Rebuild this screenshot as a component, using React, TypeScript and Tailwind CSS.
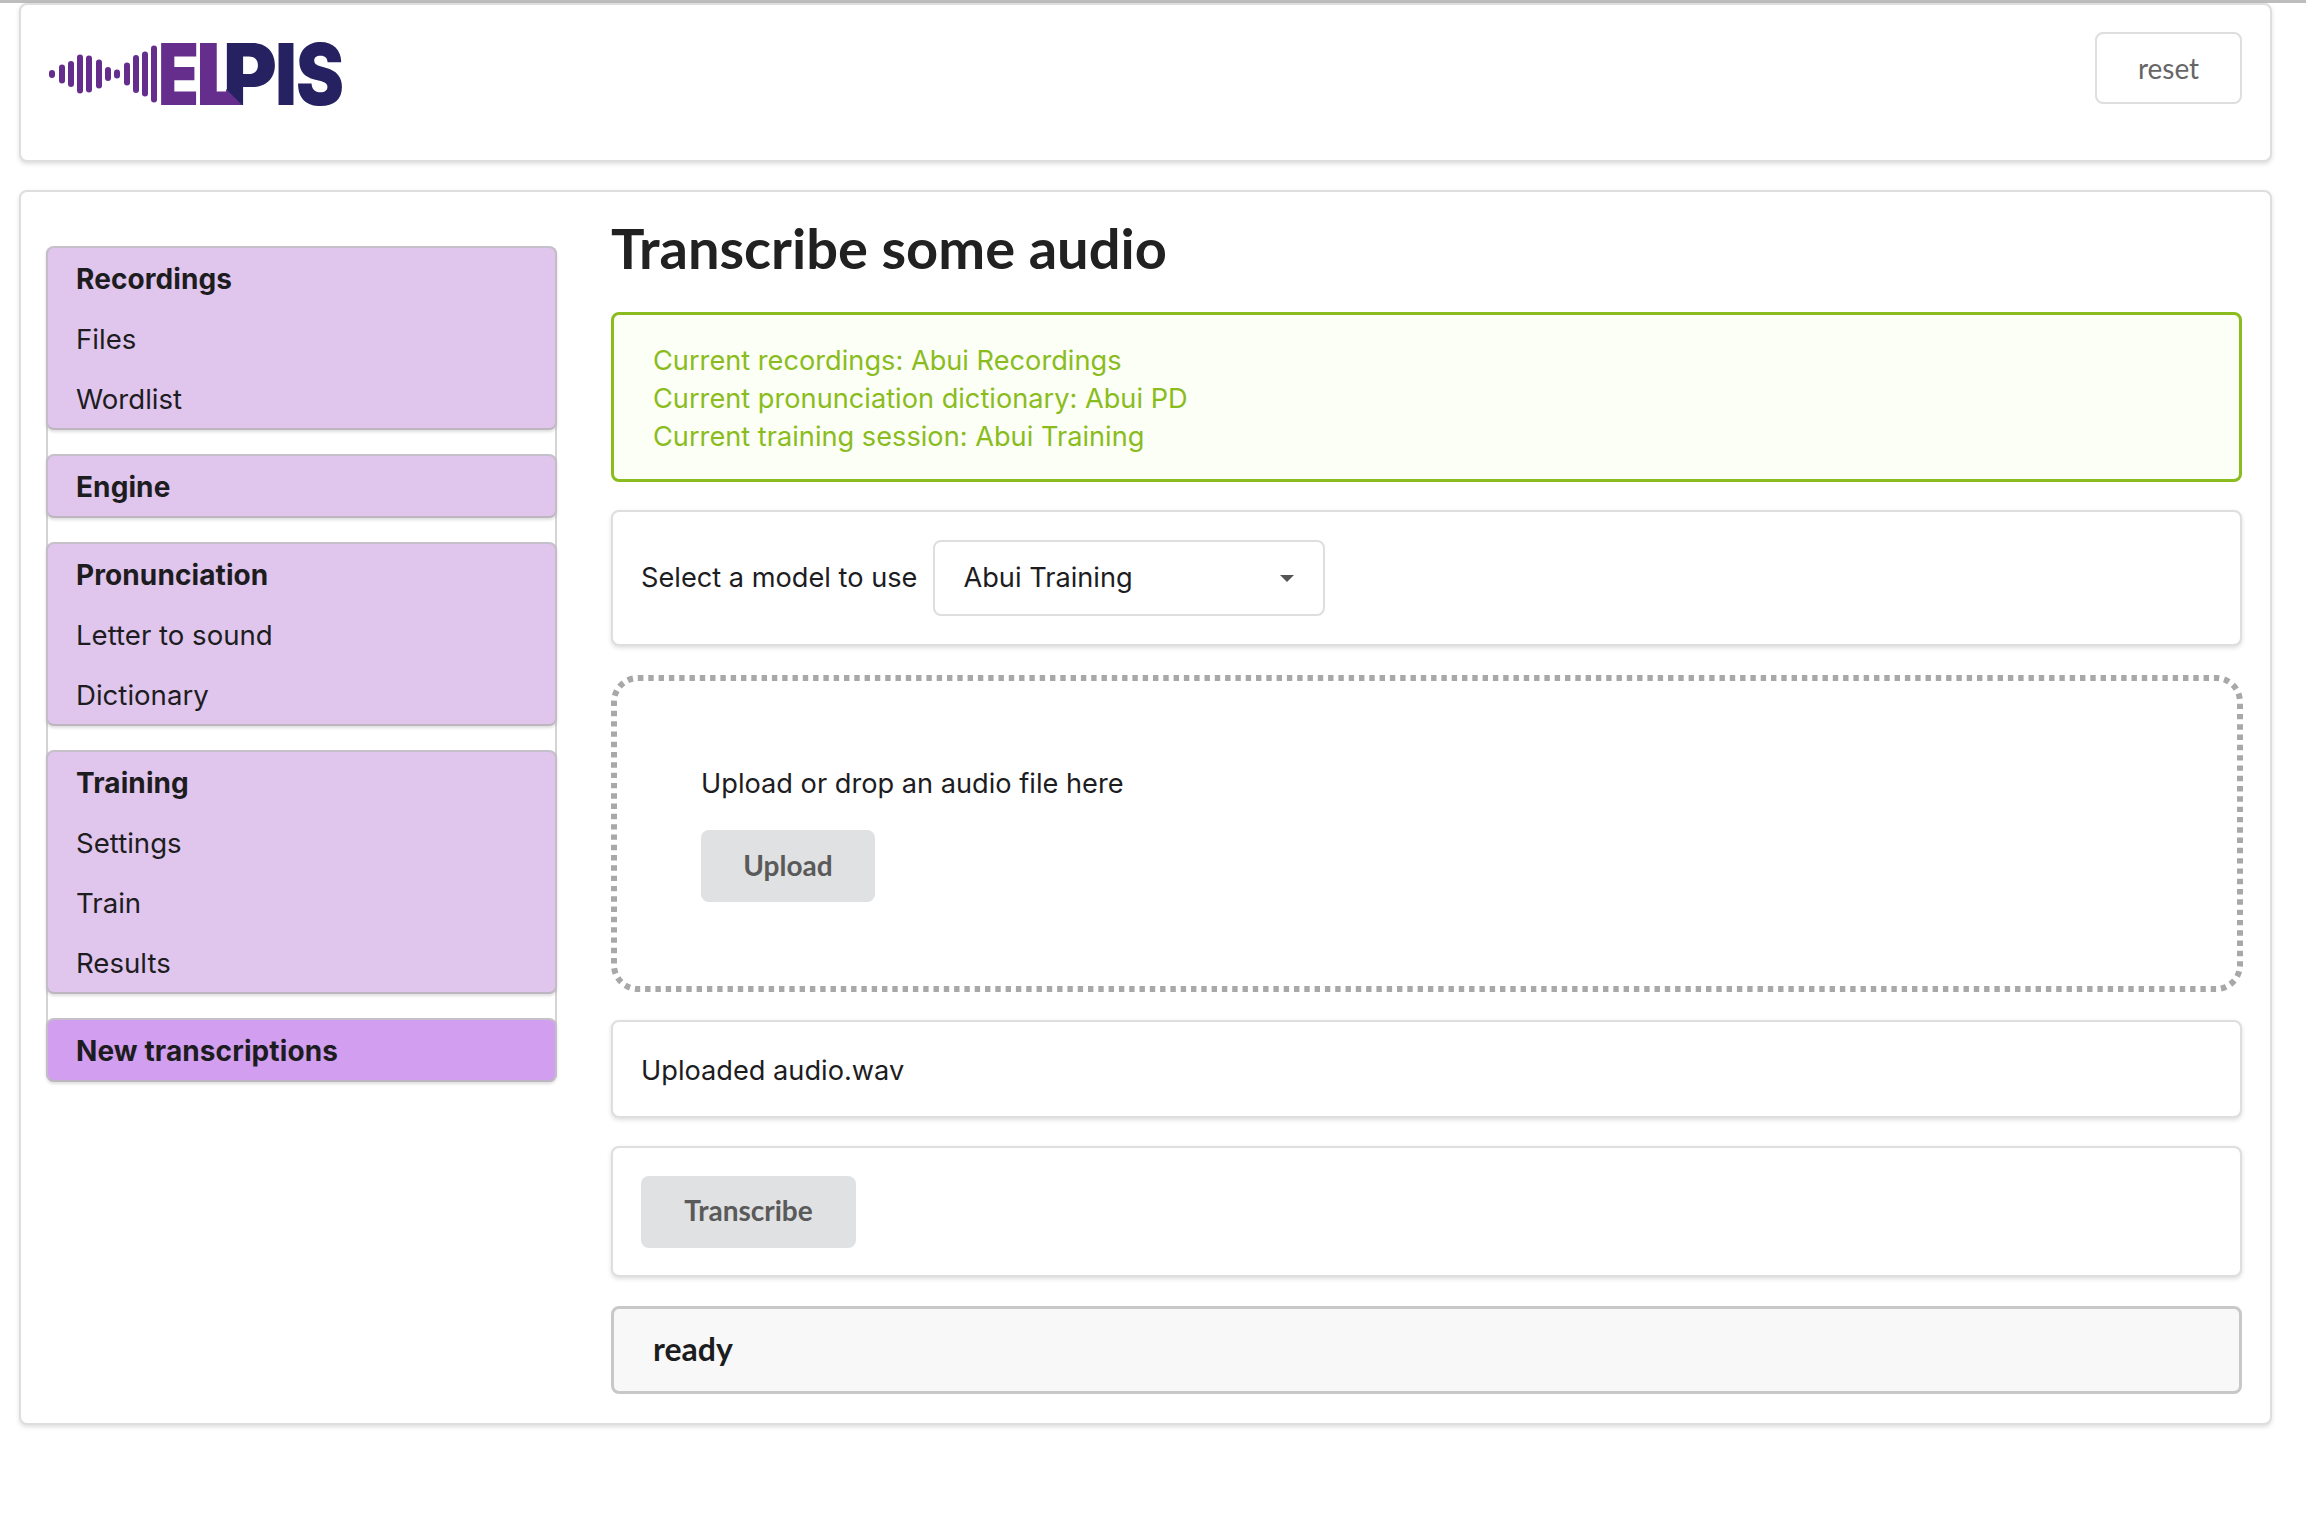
const sections = [
  { title: "Recordings", items: ["Files", "Wordlist"] },
  { title: "Engine", items: [] },
  { title: "Pronunciation", items: ["Letter to sound", "Dictionary"] },
  { title: "Training", items: ["Settings", "Train", "Results"] },
  { title: "New transcriptions", items: [], active: true },
];

const bars = [
  [51, 8], [61, 19], [70, 26], [79, 39], [88, 37], [98, 29],
  [107, 14], [116, 9], [126, 23], [135, 38], [144, 45], [153, 57],
];

// logo letters are placed one by one so the wordmark keeps its tight spacing
const letters = [
  { ch: "E", x: 157, w: 41, fill: "#652d8c" },
  { ch: "L", x: 195, w: 48, fill: "#652d8c" },
  { ch: "P", x: 222, w: 54, fill: "#262262" },
  { ch: "I", x: 274, w: 22, fill: "#262262" },
  { ch: "S", x: 295, w: 48, fill: "#262262" },
];

function Logo() {
  return (
    <svg width="310" height="70" viewBox="46 38 310 70" className="block">
      {bars.map(([x, h]) => (
        <rect key={x} x={x - 3} y={73 - h / 2} width="6" height={h} rx="3" fill="#652d8c" />
      ))}
      {letters.map((l) => (
        <text
          key={l.ch}
          x={l.x}
          y="104"
          fill={l.fill}
          fontFamily="Inter, sans-serif"
          fontWeight="900"
          fontSize="85"
          textLength={l.w}
          lengthAdjust="spacingAndGlyphs"
        >
          {l.ch}
        </text>
      ))}
      <polygon points="225,88 241,104 225,104" fill="#652d8c" />
    </svg>
  );
}

function Segment({ className = "", children }: { className?: string; children: React.ReactNode }) {
  return (
    <div className={`rounded-lg border-2 border-[#dedede] bg-white shadow-[0_2px_4px_0_rgba(34,36,38,0.15)] ${className}`}>
      {children}
    </div>
  );
}

function GreyButton({ label, className = "" }: { label: string; className?: string }) {
  return (
    <button className={`h-[72px] rounded-lg bg-[#e0e1e2] pb-[3px] font-['Lato'] text-[28px] font-bold text-[#5a5a5a] ${className}`}>
      {label}
    </button>
  );
}

export default function App() {
  return (
    <div className="min-h-[1516px] bg-white font-['Inter',sans-serif] text-[27.2px] text-[#1d1d1f]">
      <div className="h-[3px] bg-[#bdbdbd]" />

      {/* Header */}
      <div className="pl-[19px] pr-[34px]">
        <Segment className="flex h-[159px] items-start justify-between pl-[26px] pr-[28px] pt-[27px]">
          <div className="pt-[7px]">
            <Logo />
          </div>
          <button className="h-[72px] w-[147px] rounded-lg border-2 border-[#dedede] bg-white pb-[1px] font-['Lato'] text-[28px] text-[#666]">
            reset
          </button>
        </Segment>
      </div>

      {/* Main */}
      <div className="mt-[28px] pl-[19px] pr-[34px]">
        <Segment className="flex h-[1235px] pl-[25px] pr-[28px]">
          <div className="mt-[54px] w-[511px] shrink-0 self-start rounded-lg border-x-2 border-[#d4d4d4]">
            <div className="-mx-[2px] flex flex-col gap-[24px]">
              {sections.map((s) => (
                <div
                  key={s.title}
                  className={`rounded-lg border-2 border-x-[#c4bcc8] border-t-[#c6c0ca] border-b-[#bdb6c0] shadow-[0_2px_3px_0_rgba(34,36,38,0.15)] ${s.active ? "bg-[#d29ef0]" : "bg-[#e0c5ed]"}`}
                >
                  <div className="-mt-[2px] flex h-[62px] items-center px-[28px] pt-[3px] text-[28px] font-bold tracking-[0.1px]">
                    {s.title}
                  </div>
                  {s.items.map((item) => (
                    <div key={item} className="flex h-[60px] items-center px-[28px] pt-[3px] text-[27.6px]">
                      {item}
                    </div>
                  ))}
                </div>
              ))}
            </div>
          </div>

          <div className="ml-[54px] flex min-w-0 flex-1 flex-col">
            <h1 className="mt-[21px] font-['Lato'] text-[56px] font-bold leading-[70px] text-[#212121]">
              Transcribe some audio
            </h1>

            <div className="mt-[29px] h-[170px] rounded-lg border-[3px] border-[#8abc1e] bg-[#fcfff5] px-[39px] pb-[28px] pt-[27px] leading-[38px] text-[#8abc1e]">
              <div>Current recordings: Abui Recordings</div>
              <div>Current pronunciation dictionary: Abui PD</div>
              <div>Current training session: Abui Training</div>
            </div>

            <Segment className="mt-[28px] flex h-[136px] items-center gap-[16px] px-[28px]">
              <span>Select a model to use</span>
              <div className="flex h-[76px] w-[392px] items-center justify-between rounded-lg border-2 border-[#dedede] pl-[28px] pr-[29px]">
                <span className="pt-[1px]">Abui Training</span>
                <span className="h-0 w-0 border-x-[7px] border-t-[7px] border-x-transparent border-t-[#555]" />
              </div>
            </Segment>

            <div className="relative mt-[29px] h-[317px] pl-[90px] pt-[87px]">
              <svg className="absolute inset-0" width="1632" height="317" fill="none">
                <rect x="3" y="3" width="1626" height="311" rx="24" stroke="#a8a8a8" strokeWidth="6" strokeDasharray="5.4 4.9" />
              </svg>
              <div className="leading-[44px]">Upload or drop an audio file here</div>
              <GreyButton label="Upload" className="mt-[24px] w-[174px]" />
            </div>

            <Segment className="mt-[28px] flex h-[98px] items-center px-[28px] pt-[4px]">Uploaded audio.wav</Segment>

            <Segment className="mt-[28px] flex h-[131px] items-center px-[28px]">
              <GreyButton label="Transcribe" className="w-[215px]" />
            </Segment>

            <div className="mt-[29px] flex h-[88px] items-center rounded-lg border-[3px] border-[#c8c8c8] bg-[#f8f8f8] px-[39px] pb-[2px] font-['Lato'] text-[32px] font-bold">
              ready
            </div>
          </div>
        </Segment>
      </div>
    </div>
  );
}
